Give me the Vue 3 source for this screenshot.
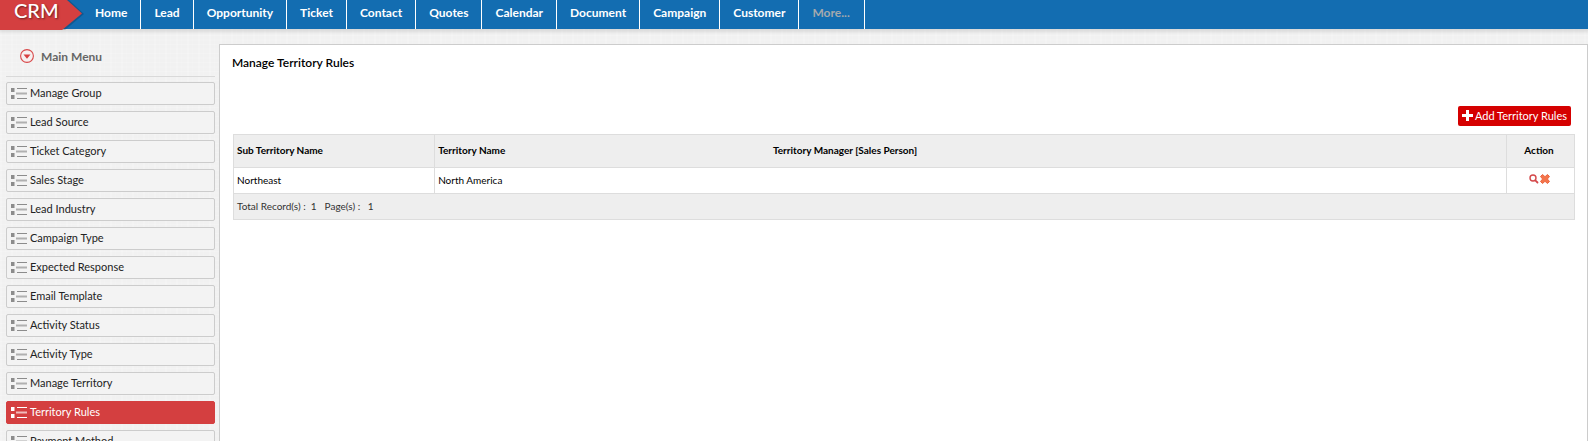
<script setup>
const navItems = ['Home', 'Lead', 'Opportunity', 'Ticket', 'Contact', 'Quotes', 'Calendar', 'Document', 'Campaign', 'Customer']

const menuItems = [
  'Manage Group',
  'Lead Source',
  'Ticket Category',
  'Sales Stage',
  'Lead Industry',
  'Campaign Type',
  'Expected Response',
  'Email Template',
  'Activity Status',
  'Activity Type',
  'Manage Territory',
  'Territory Rules',
  'Payment Method',
]
const activeItem = 'Territory Rules'

const rules = [{ sub: 'Northeast', territory: 'North America', manager: '' }]
</script>

<template>
  <div class="app">
    <header class="topbar">
      <a class="brand" href="#">
        <svg class="brand-shape" viewBox="0 0 86 32" width="86" height="32" aria-hidden="true">
          <path class="brand-shadow" d="M0 0H69L84 14L65 30H0Z" />
          <path class="brand-fill" d="M0 0H67L82 13.500L62 30H0Z" />
        </svg>
        <span class="brand-name">CRM</span>
      </a>
      <nav class="nav">
        <a v-for="item in navItems" :key="item" class="nav-link" href="#">{{ item }}</a>
        <a class="nav-link more" href="#">More...</a>
      </nav>
    </header>

    <div class="body">
      <aside class="sidebar">
        <h2 class="menu-title">
          <svg width="14" height="14" viewBox="0 0 14 14" aria-hidden="true">
            <circle cx="7" cy="7" r="6.400" fill="#f6f0f0" stroke="#d8494a" stroke-width="1.100" />
            <path d="M3.500 5.400H10.500L7 9.800Z" fill="#d63f40" />
          </svg>
          Main Menu
        </h2>
        <ul class="menu">
          <li v-for="item in menuItems" :key="item">
            <a class="menu-link" :class="{ active: item === activeItem }" href="#">
              <svg class="list-icon" width="16" height="11" viewBox="0 0 16 11" aria-hidden="true">
                <path d="M0 0H3.500V4H0ZM0 7H3.500V11H0Z" />
                <path d="M6 0H16V1H6ZM6 10H16V11H6Z" />
                <path opacity="0.650" d="M5 4.500H16V6.500H5Z" />
              </svg>
              <span class="menu-text">{{ item }}</span>
            </a>
          </li>
        </ul>
      </aside>

      <main class="panel">
        <h1 class="title">Manage Territory Rules</h1>
        <div class="actions">
          <button class="add" type="button">
            <svg width="11" height="11" viewBox="0 0 11 11" aria-hidden="true">
              <path fill="#fff" d="M4 0H7V4H11V7H7V11H4V7H0V4H4Z" />
            </svg>
            Add Territory Rules
          </button>
        </div>
        <table class="grid">
          <colgroup>
            <col class="col-sub" />
            <col class="col-territory" />
            <col />
            <col class="col-action" />
          </colgroup>
          <thead>
            <tr>
              <th>Sub Territory Name</th>
              <th class="open">Territory Name</th>
              <th>Territory Manager [Sales Person]</th>
              <th class="center">Action</th>
            </tr>
          </thead>
          <tbody>
            <tr v-for="rule in rules" :key="rule.sub">
              <td>{{ rule.sub }}</td>
              <td class="open">{{ rule.territory }}</td>
              <td>{{ rule.manager }}</td>
              <td class="center">
                <div class="tools">
                  <button class="tool" type="button" aria-label="View">
                    <svg width="10" height="10" viewBox="0 0 10 10" aria-hidden="true">
                      <circle cx="4" cy="4" r="3" fill="#fff" stroke="#d4484a" stroke-width="1.400" />
                      <path d="M6.300 6.300L8.500 8.500" stroke="#d4484a" stroke-width="1.800" stroke-linecap="round" />
                    </svg>
                  </button>
                  <button class="tool" type="button" aria-label="Delete">
                    <svg width="10" height="10" viewBox="0 0 10 10" aria-hidden="true">
                      <path
                        d="M2.500 .5L5 2.700L7.500 .5L9.500 2.500L7.400 5L9.500 7.500L7.500 9.500L5 7.300L2.500 9.500L.5 7.500L2.600 5L.5 2.500Z"
                        fill="#f4744a" stroke="#ea6540" stroke-linejoin="round"
                      />
                    </svg>
                  </button>
                </div>
              </td>
            </tr>
          </tbody>
          <tfoot>
            <tr>
              <td colspan="4">
                <span class="count">Total Record(s) :&nbsp; 1</span>
                <span class="count">Page(s) :&nbsp;&nbsp; 1</span>
              </td>
            </tr>
          </tfoot>
        </table>
      </main>
    </div>
  </div>
</template>

<style>
body {
  margin: 0;
}
</style>

<style scoped>
.app {
  display: flex;
  flex-direction: column;
  height: 100vh;
  overflow: hidden;
  font-family: Lato, "Liberation Sans", sans-serif;
  font-size: 11px;
  color: #222;
  background-color: #f1f1f1;
  background-image:
    repeating-linear-gradient(90deg, rgba(255, 255, 255, 0.16) 0 2px, transparent 2px 5px, rgba(255, 255, 255, 0.1) 5px 6px, transparent 6px 11px),
    repeating-linear-gradient(0deg, rgba(255, 255, 255, 0.16) 0 1px, transparent 1px 4px, rgba(255, 255, 255, 0.1) 4px 6px, transparent 6px 9px);
}

a {
  color: inherit;
  text-decoration: none;
}

.topbar {
  display: flex;
  flex: none;
  height: 29px;
  background: #136db1;
  box-shadow: 0 2px 3px 1px rgba(0, 0, 0, 0.1);
}

.brand {
  position: relative;
  width: 82px;
  height: 29px;
}

.brand-shape {
  position: absolute;
  top: 0;
  left: 0;
}

.brand-shadow {
  fill: rgba(0, 0, 0, 0.18);
}

.brand-fill {
  fill: #d43f40;
}

.brand-name {
  position: relative;
  display: block;
  padding-left: 14px;
  font-size: 20px;
  line-height: 20px;
  color: #fff;
  font-weight: 500;
  text-shadow: 1px 1px 2px rgba(0, 0, 0, 0.5);
}

.nav {
  display: flex;
}

.nav-link {
  padding: 0 13px;
  border-right: 1px solid #fff;
  font-size: 12px;
  line-height: 26px;
  font-weight: 700;
  color: #fff;
}

.more {
  padding: 0 14px 0 13px;
  color: #a5a9ad;
}

.body {
  display: flex;
  flex: 1;
  min-height: 0;
}

.sidebar {
  flex: none;
  width: 209px;
  padding: 15px 4px 0 6px;
}

.menu-title {
  display: flex;
  align-items: center;
  gap: 7px;
  height: 24px;
  margin: 0;
  padding: 0 0 8px 14px;
  border-bottom: 1px solid #d9d9d9;
  font-size: 12px;
  font-weight: 700;
  color: #666;
}

.menu {
  display: flex;
  flex-direction: column;
  gap: 6px;
  margin: 0;
  padding: 5px 0 0;
  list-style: none;
}

.menu-link {
  display: flex;
  align-items: center;
  gap: 3px;
  height: 21px;
  padding-left: 4px;
  border: 1px solid #ccc;
  border-radius: 2px;
  background: #f3f3f3;
}

.menu-text {
  padding-bottom: 2px;
}

.list-icon {
  fill: #8c8c8c;
}

.active {
  border-color: #d43f40;
  background: #d43f40;
  color: #fff;
}

.active .list-icon {
  fill: #fff;
}

.panel {
  flex: 1;
  min-width: 0;
  margin-top: 15px;
  padding: 10px 12px 0;
  border: 1px solid #ccc;
  border-bottom: 0;
  background: #fff;
}

.title {
  margin: 0;
  font-size: 12px;
  line-height: 16px;
  font-weight: 600;
  color: #000;
}

.actions {
  display: flex;
  justify-content: flex-end;
  padding: 35px 4px 8px 0;
}

.add {
  display: flex;
  align-items: center;
  gap: 2px;
  height: 20px;
  padding: 0 4px 2px;
  border: 0;
  border-radius: 2px;
  background: #d50000;
  color: #fff;
  font-family: inherit;
  font-size: 11px;
}

.grid {
  width: calc(100% - 1px);
  margin-left: 1px;
  table-layout: fixed;
  border-collapse: collapse;
  border: 1px solid #ddd;
  font-size: 10px;
  color: #000;
}

.col-sub {
  width: 15%;
}

.col-territory {
  width: 25%;
}

.col-action {
  width: 68px;
}

.grid th,
.grid td {
  height: 23px;
  padding: 0 3px 2px;
  border: 1px solid #ddd;
  text-align: left;
}

.grid th {
  height: 30px;
  background: #eee;
  font-weight: 700;
}

.grid .open {
  border-right: 0;
}

.grid .open + * {
  border-left: 0;
}

.grid .center {
  padding-right: 6px;
  text-align: center;
}

.grid tfoot td {
  background: #eee;
  color: #333;
}

.count {
  margin-right: 8px;
}

.tools {
  display: flex;
  justify-content: center;
  gap: 1px;
  padding-bottom: 1px;
}

.tool {
  display: flex;
  padding: 0;
  border: 0;
  background: none;
}
</style>
